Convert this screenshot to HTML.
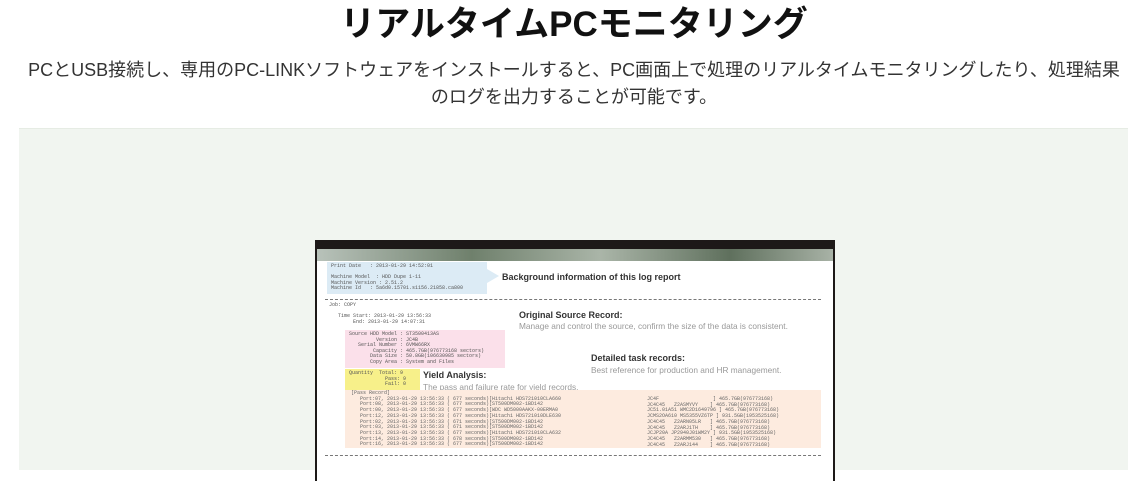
<!DOCTYPE html>
<html><head><meta charset="utf-8"><style>
*{margin:0;padding:0;box-sizing:border-box}
body{width:1148px;height:481px;overflow:hidden;background:#fff;font-family:"Liberation Sans","Noto Sans CJK JP",sans-serif;color:#222;position:relative}
h1{position:absolute;top:3px;left:0;width:1148px;text-align:center;font-size:35px;font-weight:bold;line-height:44px;color:#111}
p.d{position:absolute;top:57px;left:10px;width:1128px;text-align:center;font-size:18px;line-height:27px;color:#333}
.panel{position:absolute;left:19px;top:128px;width:1109px;height:342px;background:#f1f5f0;border-top:1px solid #e6ece4}
.mon{position:absolute;left:315px;top:240px;width:520px;height:241px;background:#1d1918}
.scr{position:absolute;left:2px;top:9px;width:516px;height:232px;background:#fff;overflow:hidden;font-family:"Liberation Mono",monospace;font-size:5px;color:#555}
.bar{position:absolute;left:0;top:0;width:516px;height:12px;background:linear-gradient(90deg,#b8c2ba,#6f806c 30%,#aab5a8 55%,#5f705d 80%,#a8b2a6)}
.box{position:absolute}
.h{position:absolute;font-family:"Liberation Sans",sans-serif;font-weight:bold;font-size:9px;color:#333}
.s{position:absolute;font-family:"Liberation Sans",sans-serif;font-size:8.3px;color:#999}
.dash{position:absolute;left:8px;width:496px;border-top:1px dashed #777}
</style></head><body>
<h1>リアルタイムPCモニタリング</h1>
<p class="d">PCとUSB接続し、専用のPC-LINKソフトウェアをインストールすると、PC画面上で処理のリアルタイムモニタリングしたり、処理結果<br>のログを出力することが可能です。</p>
<div class="panel"></div>
<div class="mon"><div class="scr">
<div class="bar"></div>
<div class="box" style="left:10px;top:13px;width:160px;height:32px;background:#dcebf5"></div>
<div class="box" style="left:170px;top:20px;width:12px;height:14px;background:#dcebf5;clip-path:polygon(0 0,100% 50%,0 100%)"></div>
<div class="h" style="left:185px;top:23px">Background information of this log report</div>
<div style="position:absolute;left:14px;top:15px;line-height:5.5px">Print Date &nbsp;&nbsp;: 2013-01-29 14:52:01<br><br>Machine Model &nbsp;: HDD Dupe 1-11<br>Machine Version : 2.51.2<br>Machine Id &nbsp;&nbsp;: 5a6d0.15701.s1156.21858.ca800</div>
<div class="dash" style="top:50px"></div>
<div style="position:absolute;left:12px;top:54px;line-height:5.5px">Job: COPY<br><br>&nbsp;&nbsp;&nbsp;Time Start: 2013-01-29 13:56:33<br>&nbsp;&nbsp;&nbsp;&nbsp;&nbsp;&nbsp;&nbsp;&nbsp;End: 2013-01-29 14:07:31</div>
<div class="h" style="left:202px;top:61px">Original Source Record:</div>
<div class="s" style="left:202px;top:72px">Manage and control the source, confirm the size of the data is consistent.</div>
<div class="box" style="left:28px;top:81px;width:160px;height:38px;background:#fbe0ea"></div>
<div style="position:absolute;left:32px;top:83px;line-height:5.6px">Source HDD Model : ST3500413AS<br>&nbsp;&nbsp;&nbsp;&nbsp;&nbsp;&nbsp;&nbsp;&nbsp;&nbsp;Version : JC4B<br>&nbsp;&nbsp;&nbsp;Serial Number : 6VMW66RX<br>&nbsp;&nbsp;&nbsp;&nbsp;&nbsp;&nbsp;&nbsp;&nbsp;Capacity : 465.7GB(976773168 sectors)<br>&nbsp;&nbsp;&nbsp;&nbsp;&nbsp;&nbsp;&nbsp;Data Size : 50.8GB(106630985 sectors)<br>&nbsp;&nbsp;&nbsp;&nbsp;&nbsp;&nbsp;&nbsp;Copy Area : System and Files</div>
<div class="h" style="left:274px;top:104px">Detailed task records:</div>
<div class="s" style="left:274px;top:116px">Best reference for production and HR management.</div>
<div class="box" style="left:28px;top:120px;width:75px;height:21px;background:#f7f08a"></div>
<div style="position:absolute;left:32px;top:122px;line-height:5.6px">Quantity &nbsp;Total: 9<br>&nbsp;&nbsp;&nbsp;&nbsp;&nbsp;&nbsp;&nbsp;&nbsp;&nbsp;&nbsp;&nbsp;&nbsp;Pass: 9<br>&nbsp;&nbsp;&nbsp;&nbsp;&nbsp;&nbsp;&nbsp;&nbsp;&nbsp;&nbsp;&nbsp;&nbsp;Fail: 0</div>
<div class="h" style="left:106px;top:121px">Yield Analysis:</div>
<div class="s" style="left:106px;top:133px">The pass and failure rate for yield records.</div>
<div class="box" style="left:28px;top:141px;width:476px;height:58px;background:#fdebdf"></div>
<div style="position:absolute;left:34px;top:142px;line-height:5.7px;color:#666">[Pass Record]<br>&nbsp;&nbsp;&nbsp;Port:07, 2013-01-29 13:56:33 ( 677 seconds)[Hitachi HDS721010CLA660<br>&nbsp;&nbsp;&nbsp;Port:08, 2013-01-29 13:56:33 ( 677 seconds)[ST500DM002-1BD142<br>&nbsp;&nbsp;&nbsp;Port:00, 2013-01-29 13:56:33 ( 677 seconds)[WDC WD5000AAKX-00ERMA0<br>&nbsp;&nbsp;&nbsp;Port:12, 2013-01-29 13:56:33 ( 677 seconds)[Hitachi HDS721010DLE630<br>&nbsp;&nbsp;&nbsp;Port:02, 2013-01-29 13:56:33 ( 671 seconds)[ST500DM002-1BD142<br>&nbsp;&nbsp;&nbsp;Port:03, 2013-01-29 13:56:33 ( 671 seconds)[ST500DM002-1BD142<br>&nbsp;&nbsp;&nbsp;Port:13, 2013-01-29 13:56:33 ( 677 seconds)[Hitachi HDS721010CLA632<br>&nbsp;&nbsp;&nbsp;Port:14, 2013-01-29 13:56:33 ( 678 seconds)[ST500DM002-1BD142<br>&nbsp;&nbsp;&nbsp;Port:16, 2013-01-29 13:56:33 ( 677 seconds)[ST500DM002-1BD142</div>
<div style="position:absolute;left:330px;top:148px;line-height:5.7px;color:#666">JC4F&nbsp;&nbsp;&nbsp;&nbsp;&nbsp;&nbsp;&nbsp;&nbsp;&nbsp;&nbsp;&nbsp;&nbsp;&nbsp;&nbsp;&nbsp;&nbsp;&nbsp;&nbsp;] 465.7GB(976773168)<br>JC4C45 &nbsp;&nbsp;Z2ASMYVY&nbsp;&nbsp;&nbsp;&nbsp;] 465.7GB(976773168)<br>JC51.01A51&nbsp;WMC2D1649796&nbsp;] 465.7GB(976773168)<br>JCMS2OA610&nbsp;MS5355VZ6TP&nbsp;] 931.5GB(1953525168)<br>JC4C45 &nbsp;&nbsp;Z2ARN05LR&nbsp;&nbsp;&nbsp;] 465.7GB(976773168)<br>JC4C45 &nbsp;&nbsp;Z2ARJ1TH&nbsp;&nbsp;&nbsp;&nbsp;] 465.7GB(976773168)<br>JCJP20A&nbsp;JP2940J01WM2Y&nbsp;] 931.5GB(1953525168)<br>JC4C45 &nbsp;&nbsp;Z2ARMM530&nbsp;&nbsp;&nbsp;] 465.7GB(976773168)<br>JC4C45 &nbsp;&nbsp;Z2ARJ144&nbsp;&nbsp;&nbsp;&nbsp;] 465.7GB(976773168)</div>
<div class="dash" style="top:206px"></div>
</div></div>
</body></html>
